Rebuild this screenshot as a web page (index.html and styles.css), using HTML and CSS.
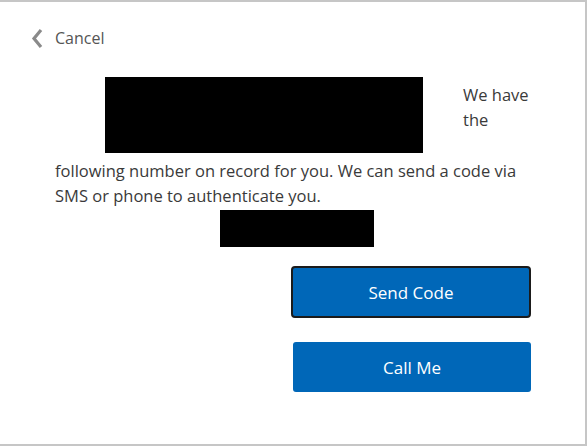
FILE: index.html
```html
<!DOCTYPE html>
<html>
<head>
<meta charset="utf-8">
<link rel="stylesheet" href="styles.css">
</head>
<body>
<div class="dialog">
  <div class="back">
    <svg class="chev" width="12" height="21" viewBox="0 0 12 21"><path d="M10 2 L3 10.5 L10 19" fill="none" stroke="#8a8a8a" stroke-width="3.2"/></svg>
    <span class="cancel">Cancel</span>
  </div>
  <div class="content">
    <p class="msg"><span class="redact big"></span>We have the following number on record for you. We can send a code via SMS or phone to authenticate you.</p>
    <div class="redact small"></div>
    <div class="actions">
      <button class="btn focused">Send Code</button>
      <button class="btn">Call Me</button>
    </div>
  </div>
</div>
</body>
</html>
```
FILE: styles.css
```css
html, body {
  margin: 0;
  padding: 0;
  background: #fff;
}
.dialog {
  width: 587px;
  height: 446px;
  box-sizing: border-box;
  border-top: 2px solid #c6c6c6;
  border-right: 2px solid #c6c6c6;
  border-bottom: 2px solid #c6c6c6;
  font-family: "Open Sans", "Noto Sans", sans-serif;
  color: #3a3a3a;
  padding: 0 56px 0 55px;
}
.back {
  display: flex;
  align-items: center;
  margin-left: -24px;
  padding-top: 25px;
  height: 22px;
  gap: 12px;
}
.chev { display: block; }
.cancel {
  font-size: 16px;
  color: #555;
}
.content {
  padding-top: 28px;
}
.msg {
  margin: 0;
  padding-top: 5px;
  font-size: 16.5px;
  line-height: 25px;
}
.redact { background: #000; }
.big {
  float: left;
  width: 318px;
  height: 76px;
  margin: -5px 40px 5px 50px;
}
.small {
  width: 154px;
  height: 37px;
  margin: 2px 0 0 165px;
}
.actions {
  display: flex;
  flex-direction: column;
  align-items: flex-end;
  gap: 24px;
  margin-top: 19px;
  margin-right: -2px;
}
.btn {
  width: 238px;
  height: 50px;
  background: #0067b8;
  color: #fff;
  border: none;
  border-radius: 3px;
  font-family: "Open Sans", "Noto Sans", sans-serif;
  font-size: 17px;
}
.btn.focused {
  width: 240px;
  height: 52px;
  border: 2px solid #1b1b1b;
  border-radius: 4px;
}
```
